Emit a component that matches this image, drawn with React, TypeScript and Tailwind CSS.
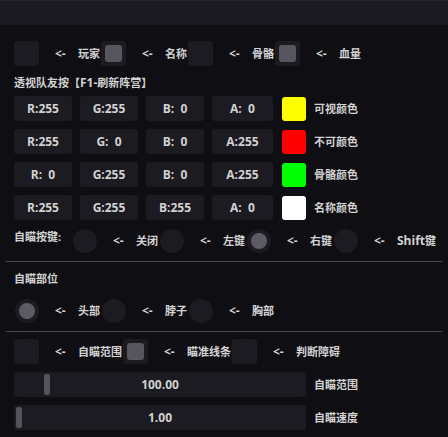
import React from "react";

// ImGui-style aimbot / ESP settings panel

const FRAME = "bg-[#1c1b21] rounded-[3px]";
const LAT = "text-[12px]";

const Check = ({ on }: { on?: boolean }) => (
  <div className={`w-[25px] h-[25px] shrink-0 flex items-center justify-center ${FRAME}`}>
    {on && <div className="w-[17px] h-[17px] rounded-[3px] bg-[#57565e]" />}
  </div>
);

const Radio = ({ on }: { on?: boolean }) => (
  <div className="w-[25px] h-[25px] shrink-0 flex items-center justify-center">
    <div className="w-[24px] h-[24px] rounded-full bg-[#1c1b21] flex items-center justify-center">
      {on && <div className="w-[16px] h-[16px] rounded-full bg-[#5c5b63]" />}
    </div>
  </div>
);

const Opt = ({ label, children }: { label: React.ReactNode; children: React.ReactNode }) => (
  <div className="flex items-center mr-[1px]">
    {children}
    <span className={`ml-[16px] w-[23px] shrink-0 ${LAT}`}>&lt;-</span>
    <span className="whitespace-nowrap">{label}</span>
  </div>
);

type ColorRow = { vals: string[]; color: string; label: string };

const colorRows: ColorRow[] = [
  { vals: ["R:255", "G:255", "B:  0", "A:  0"], color: "#ffff00", label: "可视颜色" },
  { vals: ["R:255", "G:  0", "B:  0", "A:255"], color: "#ff0000", label: "不可颜色" },
  { vals: ["R:  0", "G:255", "B:  0", "A:255"], color: "#00ff00", label: "骨骼颜色" },
  { vals: ["R:255", "G:255", "B:255", "A:  0"], color: "#ffffff", label: "名称颜色" },
];

const widths = ["w-[58px]", "w-[58px]", "w-[58px]", "w-[61px]"];

const Slider = ({ value, grab, label }: { value: string; grab: number; label: string }) => (
  <div className="flex items-center h-[25px]">
    <div className={`relative w-[292px] h-[25px] flex items-center justify-center ${FRAME}`}>
      <div
        className="absolute top-[2px] w-[6px] h-[21px] rounded-[2px] bg-[#55545b]"
        style={{ left: grab }}
      />
      <span className={LAT}>{value}</span>
    </div>
    <span className="ml-[8px]">{label}</span>
  </div>
);

export default function App() {
  return (
    <div className="w-[448px] h-[437px] bg-[#0f0e12] text-[#d2d2d2] text-[11px] font-bold leading-none font-['Open_Sans','Noto_Sans_CJK_SC',sans-serif] overflow-hidden">
      <div className="h-[25px] bg-[#1b1a20] border-t border-[#26252b]" />

      <div className="pl-[14px]">
        {/* draw toggles */}
        <div className="flex items-center mt-[16px]">
          <Opt label="玩家"><Check /></Opt>
          <Opt label="名称"><Check on /></Opt>
          <Opt label="骨骼"><Check /></Opt>
          <Opt label="血量"><Check on /></Opt>
        </div>

        <div className="mt-[11px] h-[12px]">
          透视队友按【<span className={LAT}>F1-</span>刷新阵营】
        </div>

        <div className="mt-[7px] flex flex-col gap-[8px]">
          {colorRows.map((row, i) => (
            <div key={i} className="flex items-center h-[25px]">
              <div className="flex gap-[8px]">
                {row.vals.map((v, j) => (
                  <div key={j} className={`${widths[j]} h-[25px] flex items-center justify-center whitespace-pre ${LAT} ${FRAME}`}>
                    {v}
                  </div>
                ))}
              </div>
              <div className="ml-[9px] w-[24px] h-[24px] rounded-[3px]" style={{ backgroundColor: row.color }} />
              <span className="ml-[8px]">{row.label}</span>
            </div>
          ))}
        </div>

        {/* aim key */}
        <div className="flex items-start mt-[8px] h-[25px]">
          <span className="w-[58px] mt-[3px]">自瞄按键:</span>
          <div className="flex items-center">
            <Opt label="关闭"><Radio /></Opt>
            <Opt label="左键"><Radio /></Opt>
            <Opt label="右键"><Radio on /></Opt>
            <Opt label={<><span className={LAT}>Shift</span>键</>}><Radio /></Opt>
          </div>
        </div>
      </div>

      <div className="mx-[6px] mt-[8px] h-px bg-[#48474e]" />

      <div className="pl-[14px]">
        <div className="mt-[11px] h-[12px]">自瞄部位</div>
        <div className="flex items-center mt-[13px]">
          <Opt label="头部"><Radio on /></Opt>
          <Opt label="脖子"><Radio /></Opt>
          <Opt label="胸部"><Radio /></Opt>
        </div>
      </div>

      <div className="mx-[6px] mt-[8px] h-px bg-[#48474e]" />

      <div className="pl-[14px]">
        <div className="flex items-center mt-[7px]">
          <Opt label="自瞄范围"><Check /></Opt>
          <Opt label="瞄准线条"><Check on /></Opt>
          <Opt label="判断障碍"><Check /></Opt>
        </div>
        <div className="mt-[8px] flex flex-col gap-[8px]">
          <Slider value="100.00" grab={30} label="自瞄范围" />
          <Slider value="1.00" grab={2} label="自瞄速度" />
        </div>
      </div>
    </div>
  );
}
